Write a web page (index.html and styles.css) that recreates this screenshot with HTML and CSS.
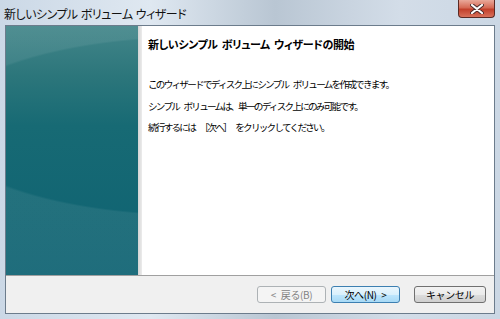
FILE: index.html
```html
<!DOCTYPE html>
<html>
    <head>
        <title>新しいシンプル ボリューム ウィザード</title>
        <link rel="stylesheet" href="styles.css">
    </head>
    <body>
        <div class="window">
            <div class="titlebar">
                <span class="title">新しいシンプル ボリューム ウィザード</span>
                <div class="close">
                    <svg width="14" height="10" viewBox="0 0 14 10">
                        <path d="M2 1 L12 9 M12 1 L2 9" stroke="#4a2a2a" stroke-width="4" stroke-linecap="round"/>
                        <path d="M2 1 L12 9 M12 1 L2 9" stroke="#fff" stroke-width="2.2" stroke-linecap="round"/>
                    </svg>
                </div>
            </div>
            <div class="client">
                <div class="main">
                    <div class="side"></div>
                    <div class="divider"></div>
                    <div class="content">
                        <h1>新しいシンプル ボリューム ウィザードの開始</h1>
                        <p>このウィザードでディスク上にシンプル ボリュームを作成できます。</p>
                        <p>シンプル ボリュームは、単一のディスク上にのみ可能です。</p>
                        <p>続行するには ［次へ］ をクリックしてください。</p>
                    </div>
                </div>
                <div class="buttons">
                    <button class="btn" disabled>&lt; 戻る(B)</button>
                    <button class="btn default">次へ(N) &gt;</button>
                    <button class="btn cancel">キャンセル</button>
                </div>
            </div>
        </div>
    </body>
</html>
```

FILE: styles.css
```css
body {
    margin: 0;
    font-family: "Noto Sans CJK JP", "Noto Sans", sans-serif;
    font-feature-settings: "palt";
    color: #000;
}
.window {
    width: 500px;
    height: 319px;
    box-sizing: border-box;
    padding: 0 5px 5px 5px;
    display: flex;
    flex-direction: column;
    background: linear-gradient(to right, #cbd8e6, #dfe8f1 30%, #b9c6d3 55%, #c9d4e0 70%, #d3dde8 80%, #cbd7e4);
}
.titlebar {
    height: 25px;
    display: flex;
    align-items: flex-start;
}
.title {
    margin-left: -1px;
    font-size: 12px;
    line-height: 27px;
    letter-spacing: -0.5px;
    word-spacing: 1px;
    color: #111;
}
.close {
    margin-left: auto;
    width: 37px;
    height: 18px;
    box-sizing: border-box;
    border: 1px solid #5a2a24;
    border-top: none;
    border-radius: 0 0 4px 4px;
    background: linear-gradient(to bottom, #e9a99a, #d56a55 45%, #c2402b 55%, #d8705a);
    display: flex;
    align-items: center;
    justify-content: center;
}
.client {
    flex: 1;
    display: flex;
    flex-direction: column;
    border: 1px solid #6c7c8c;
    background: #f0f0f0;
}
.main {
    height: 249px;
    display: flex;
    border-bottom: 1px solid #a0a0a0;
    background: #fff;
}
.side {
    width: 132px;
    background:
        radial-gradient(ellipse 260px 90px at 190px 100px, rgba(255,255,255,0) 98%, rgba(255,255,255,0.07) 100%),
        linear-gradient(to bottom, #43868a, #2c767b 20%, #176a74 40%, #0e6272);
}
.divider {
    width: 4px;
    background: linear-gradient(to right, #d4d4d4, #ececec);
}
.content {
    flex: 1;
    padding: 9px 0 0 6px;
}
h1 {
    margin: 0 0 21px 0;
    font-size: 11px;
    line-height: 18px;
    font-weight: bold;
    letter-spacing: -0.4px;
    word-spacing: 2px;
}
p {
    margin: 0;
    font-size: 9.6px;
    line-height: 21.5px;
    font-feature-settings: normal;
    letter-spacing: -1.75px;
    word-spacing: 4px;
}
.buttons {
    flex: 1;
    display: flex;
    align-items: center;
    justify-content: flex-end;
    padding-right: 8px;
}
.btn {
    width: 69px;
    height: 17px;
    margin-left: 5px;
    padding: 0;
    font-family: inherit;
    font-size: 10px;
    letter-spacing: -0.4px;
    word-spacing: 3px;
    color: #000;
    border: 1px solid #707070;
    border-radius: 3px;
    background: linear-gradient(to bottom, #f2f2f2, #ebebeb 50%, #dddddd 51%, #cfcfcf);
}
.btn[disabled] {
    color: #838383;
    border-color: #adb2b5;
    background: #f4f4f4;
}
.btn.default {
    border-color: #3c7fb1;
    background: linear-gradient(to bottom, #eaf6fd, #d9f0fc 50%, #bee6fd 51%, #a7d9f5);
}
.btn.cancel {
    width: 72px;
    margin-left: 14px;
}
```
